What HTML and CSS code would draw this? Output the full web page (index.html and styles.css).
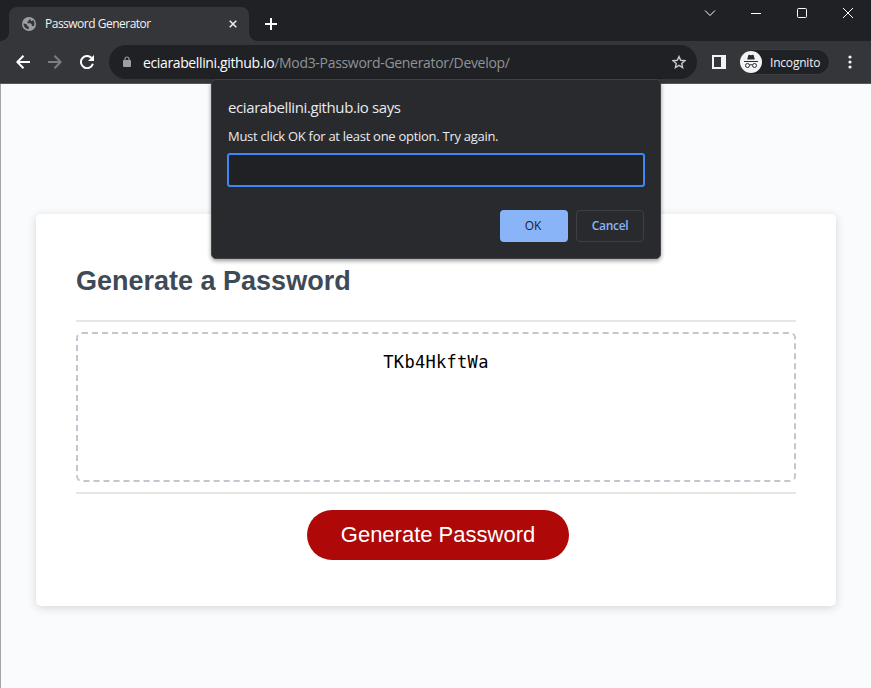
FILE: index.html
```html
<!DOCTYPE html>
<html lang="en">
<head>
<meta charset="utf-8">
<title>Password Generator</title>
<link rel="stylesheet" href="styles.css">
</head>
<body>
<div class="browser">
  <header class="tabs">
    <div class="tab">
      <svg class="globe" width="14" height="14" viewBox="0 0 14 14"><circle cx="7" cy="7" r="7" fill="#9aa0a6"/><path d="M1.500 6.200 5 7.500l.3 1.500 1.500.8v2.300C3.800 12 1.400 9.500 1.500 6.200ZM8 1.600c0 1-.6 1.500-1.700 1.800.3 1-.3 1.300-1.100 1.500l.3 1.300h3l1.300 1.400v1.300h1.500l.3.8c1.500-2.500.9-5-.6-6.600-.5.8-1.400 1-2.200.7-.4-.9-.2-1.600-.8-2.200Z" fill="#35363a"/></svg>
      <span class="tab-title">Password Generator</span>
      <svg class="tab-close" width="8" height="8" viewBox="0 0 8 8"><path d="m.7.700 6.600 6.600m0-6.600L.7 7.300" stroke="#e8eaed" stroke-width="1.600"/></svg>
    </div>
    <svg class="plus" width="12" height="12" viewBox="0 0 12 12"><path d="M6 0v12M0 6h12" stroke="#fff" stroke-width="2"/></svg>
    <div class="window-controls">
      <svg width="12" height="12" viewBox="0 0 12 12"><path d="m1 3.500 5 5 5-5"/></svg>
      <svg width="12" height="12" viewBox="0 0 12 12"><path d="M1 6.500h10"/></svg>
      <svg width="12" height="12" viewBox="0 0 12 12"><rect x="1.500" y="1.500" width="9" height="9" rx="1"/></svg>
      <svg width="12" height="12" viewBox="0 0 12 12"><path d="m1 1 10 10M11 1 1 11"/></svg>
    </div>
  </header>
  <nav class="toolbar">
    <svg class="back" width="14" height="14" viewBox="0 0 14 14"><path d="M14 7H1.500M7.500.800 1.300 7l6.200 6.200" fill="none" stroke="#fff" stroke-width="2"/></svg>
    <svg class="forward" width="14" height="14" viewBox="0 0 14 14"><path d="M0 7h12.500M6.500.800 12.700 7l-6.200 6.200" fill="none" stroke="#7c7e82" stroke-width="2"/></svg>
    <svg class="reload" width="14" height="14" viewBox="0 0 14 14"><path d="M12.900 8.800A6.100 6.100 0 1 1 11.600 3" fill="none" stroke="#fff" stroke-width="2"/><path d="M14 0v6H8Z" fill="#fff"/></svg>
    <div class="address">
      <svg class="lock" width="8" height="12" viewBox="0 0 8 12"><path d="M2 5V3a2 2 0 0 1 4 0v2" fill="none" stroke="#9aa0a6" stroke-width="1.200"/><rect y="4" width="8" height="7" rx="1" fill="#9aa0a6"/></svg>
      <span class="host">eciarabellini.github.io</span><span class="path">/Mod3-Password-Generator/Develop/</span>
      <svg class="star" width="14" height="14" viewBox="0 0 14 14"><path d="m7 1.500 1.700 3.800 4.200.4-3.200 2.800.9 4.100L7 10.400l-3.600 2.200.9-4.100L1.100 5.700l4.200-.4Z" fill="none" stroke="#c4c7cb" stroke-width="1.400"/></svg>
    </div>
    <svg class="panel" width="14" height="14" viewBox="0 0 14 14"><path fill-rule="evenodd" d="M0 0h14v14H0ZM2 2v10h7V2Z" fill="#f1f3f4"/></svg>
    <div class="profile">
      <svg width="22" height="22" viewBox="0 0 22 22"><circle cx="11" cy="11" r="11" fill="#f1f3f4"/><path d="M7.200 8.500 8.300 4.200q.3-.7 1-.4l1.700.5 1.700-.5q.7-.3 1 .4l1.100 4.300ZM4 10h14v1H4Z" fill="#2b2c30"/><g fill="none" stroke="#2b2c30" stroke-width="1"><circle cx="7.500" cy="14.500" r="2"/><circle cx="14.500" cy="14.500" r="2"/><path d="M9.500 14q1.500-.7 3 0"/></g></svg>
      <span class="profile-name">Incognito</span>
    </div>
    <svg class="more" width="4" height="14" viewBox="0 0 4 14" fill="#f1f3f4"><circle cx="2" cy="2" r="1.600"/><circle cx="2" cy="7" r="1.600"/><circle cx="2" cy="12" r="1.600"/></svg>
  </nav>
  <main class="page">
    <section class="card">
      <h1>Generate a Password</h1>
      <div class="card-body"><div class="password">TKb4HkftWa</div></div>
      <div class="card-footer"><button class="generate">Generate Password</button></div>
    </section>
  </main>
  <div class="dialog" role="dialog">
    <div class="dialog-title"><span>eciarabellini.github.io says</span></div>
    <div class="dialog-message"><span>Must click OK for at least one option. Try again.</span></div>
    <input class="dialog-input" type="text" aria-label="Response">
    <div class="dialog-actions"><button class="ok">OK</button><button class="cancel">Cancel</button></div>
  </div>
</div>
</body>
</html>
```
FILE: styles.css
```css
* { box-sizing: border-box; }
html, body { margin: 0; height: 100%; overflow: hidden; }
body { font-family: "Open Sans", "Noto Sans", sans-serif; font-size: 12px; }
svg { display: block; flex: none; }
span { white-space: nowrap; }
button { font: inherit; padding: 0; }
.browser { position: relative; display: flex; flex-direction: column; height: 688px; background: #202124; }
.tabs { height: 41px; display: flex; align-items: flex-start; padding-left: 9px; }
.tab { position: relative; width: 240px; height: 34px; margin-top: 7px; padding: 0 12px 0 13px; display: flex; align-items: center; background: #35363a; border-radius: 8px 8px 0 0; }
.tab::before, .tab::after { content: ""; position: absolute; bottom: 0; width: 8px; height: 8px; }
.tab::before { left: -8px; background: radial-gradient(circle at 0 0, transparent 7.500px, #35363a 8px); }
.tab::after { right: -8px; background: radial-gradient(circle at 100% 0, transparent 7.500px, #35363a 8px); }
.tab-title { margin-left: 9px; padding-bottom: 1px; color: #f1f3f4; letter-spacing: -.5px; }
.tab-close { margin-left: auto; }
.plus { margin: 18px 0 0 16px; }
.window-controls { margin: 7px 17px 0 auto; display: flex; gap: 34px; fill: none; stroke: #fff; stroke-width: 1; }
.toolbar { height: 43px; background: #35363a; border-bottom: 1px solid #56575b; display: flex; align-items: center; padding-left: 16px; }
.forward, .reload { margin-left: 18px; }
.address { margin-left: 15px; width: 588px; height: 34px; border-radius: 17px; background: #202124; display: flex; align-items: center; padding: 0 11px 0 14px; font-size: 14px; }
.host { color: #fff; margin-left: 12px; letter-spacing: -.37px; }
.path { color: #8f9399; letter-spacing: -.31px; }
.star { margin-left: auto; }
.panel { margin-left: 15px; }
.profile { margin-left: 13px; width: 91px; height: 26px; border-radius: 13px; border: 1px solid #3c3d41; background: #202124; display: flex; align-items: center; padding-left: 0; }
.profile-name { margin-left: 8px; color: #f1f3f4; letter-spacing: -.2px; }
.more { margin-left: 18px; }
.page { flex: 1; border-left: 1px solid #a5a5a7; background: #f9fbfd; padding: 130px 35px 0; }
.card { width: 800px; height: 392px; padding: 0 40px; border-radius: 5px; background: #fff; box-shadow: rgba(0,0,0,.15) 0 2px 10px; font-family: "Liberation Sans", Arial, sans-serif; }
h1 { margin: 0; height: 106px; padding-top: 51px; font-size: 27px; line-height: 32px; color: #3e4a56; }
.card-body { border: solid #e6e6e6; border-width: 2px 0; padding: 10px 0; height: 174px; }
.password { height: 150px; border: 2px dashed #c0c7cf; border-radius: 6px; padding-top: 18px; text-align: center; color: #000; font: 17px/20px "DejaVu Sans Mono", monospace; letter-spacing: .3px; }
.card-footer { display: flex; justify-content: center; padding: 16px 0 0 4px; }
.generate { width: 262px; height: 50px; border: 0; border-radius: 25px; background: #ae0808; color: #fff; font-size: 22px; }
.dialog { position: absolute; left: 211px; top: 79px; width: 450px; height: 180px; padding: 15px 16px; border: 1px solid #414246; border-radius: 5px; background: #292a2d; color: #e8eaed; box-shadow: 0 2px 4px rgba(0,0,0,.4); }
.dialog-title { height: 25px; font-size: 15px; line-height: 24px; letter-spacing: -.4px; }
.dialog-message { margin-top: 6px; font-size: 13px; line-height: 20px; letter-spacing: -.28px; }
.dialog-input { display: block; width: 418px; height: 34px; margin: 7px 0 0 -1px; border: 2px solid #4285f4; border-radius: 3px; background: #202124; color: #e8eaed; outline: 0; }
.dialog-actions { margin-top: 23px; display: flex; justify-content: flex-end; gap: 8px; }
.dialog-actions button { width: 68px; height: 32px; border-radius: 4px; padding-bottom: 2px; }
.dialog-actions .ok { background: #8ab4f8; border: 0; color: #202124; padding-right: 2px; }
.cancel { background: transparent; border: 1px solid #3c4043; color: #8ab4f8; font-weight: 600; letter-spacing: -.3px; }
```
